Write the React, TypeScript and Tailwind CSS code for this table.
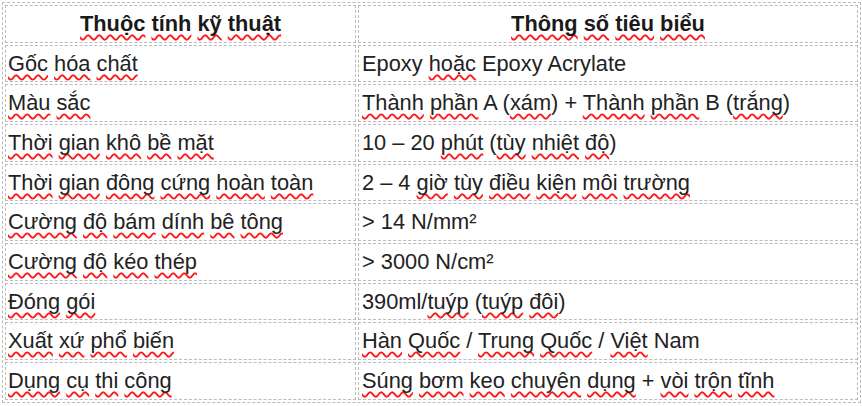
const rows: { label: string; value: string }[] = [
  { label: "*Gốc *hóa *chất", value: "Epoxy *hoặc Epoxy Acrylate" },
  { label: "*Màu *sắc", value: "*Thành *phần A (*xám) + *Thành *phần B (*trắng)" },
  { label: "*Thời *gian *khô *bề *mặt", value: "10 – 20 *phút (*tùy *nhiệt *độ)" },
  { label: "*Thời *gian *đông *cứng *hoàn *toàn", value: "2 – 4 *giờ *tùy *điều *kiện *môi *trường" },
  { label: "*Cường *độ *bám *dính *bê *tông", value: "> 14 N/mm²" },
  { label: "*Cường *độ *kéo *thép", value: "> 3000 N/cm²" },
  { label: "*Đóng *gói", value: "390ml/*tuýp (*tuýp *đôi)" },
  { label: "*Xuất *xứ *phổ *biến", value: "*Hàn *Quốc / *Trung *Quốc / *Việt Nam" },
  { label: "*Dụng *cụ *thi *công", value: "*Súng *bơm *keo *chuyên *dụng + *vòi *trộn *tĩnh" },
];

// words starting with * get the red spellcheck squiggle
function Spell({ text }: { text: string }) {
  const parts = text.split(/(\*[^\s()/*]+)/);
  return (
    <>
      {parts.map((p, i) =>
        p.startsWith("*") ? (
          <span
            key={i}
            className="underline decoration-wavy decoration-[#ff1a1a] decoration-[1.5px] underline-offset-[3px] [text-decoration-skip-ink:none]"
          >
            {p.slice(1)}
          </span>
        ) : (
          <span key={i}>{p}</span>
        )
      )}
    </>
  );
}

export default function App() {
  return (
    <div className="w-[862px] h-[406px] bg-white pt-[2px] pl-[2px] overflow-hidden">
      <table
        className="w-[859px] border border-dashed border-[#bbbbbb] border-separate border-spacing-[2px] text-[#222222] text-[21.8px] leading-[35.67px]"
        style={{ fontFamily: '"Liberation Sans", Arial, sans-serif' }}
      >
        <thead>
          <tr>
            <th className="w-[351px] border border-dashed border-[#bbbbbb] px-[2px] py-0 font-bold text-center text-[#1a1a1a]">
              <Spell text="*Thuộc *tính *kỹ *thuật" />
            </th>
            <th className="border border-dashed border-[#bbbbbb] px-[2px] py-0 font-bold text-center text-[#1a1a1a]">
              <Spell text="*Thông *số *tiêu *biểu" />
            </th>
          </tr>
        </thead>
        <tbody>
          {rows.map((row, i) => (
            <tr key={i}>
              <td className="border border-dashed border-[#bbbbbb] px-[2px] py-0 text-left whitespace-nowrap">
                <Spell text={row.label} />
              </td>
              <td className="border border-dashed border-[#bbbbbb] px-[3px] py-0 text-left whitespace-nowrap">
                <Spell text={row.value} />
              </td>
            </tr>
          ))}
        </tbody>
      </table>
    </div>
  );
}
